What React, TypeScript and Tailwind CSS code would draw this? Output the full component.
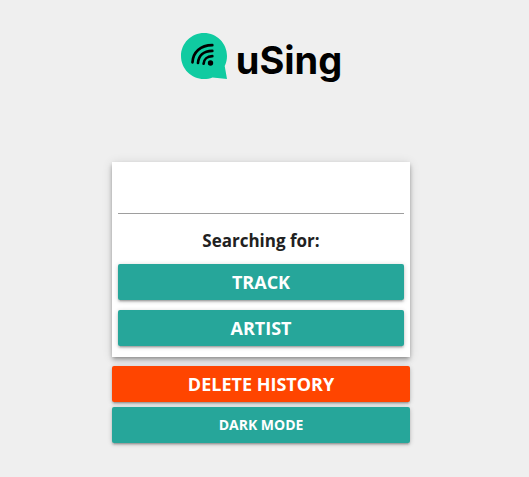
import type { ReactNode } from "react";

type ActionButtonProps = {
  children: ReactNode;
  tone?: "teal" | "danger";
  size?: "normal" | "small";
};

function ActionButton({ children, tone = "teal", size = "normal" }: ActionButtonProps) {
  const color = tone === "danger" ? "bg-[#ff4500]" : "bg-[#26a69a]";
  const text = size === "small" ? "text-[14px]" : "text-[18px]";
  return (
    <button
      type="button"
      className={`block h-9 w-full cursor-pointer rounded-xs text-center leading-9 font-bold text-white uppercase shadow-[0_2px_2px_0_rgba(0,0,0,0.14),0_3px_1px_-2px_rgba(0,0,0,0.12),0_1px_5px_0_rgba(0,0,0,0.2)] ${color} ${text}`}
    >
      {children}
    </button>
  );
}

function Logo() {
  return (
    <header className="flex h-14 justify-center gap-2">
      <svg viewBox="0 0 48 48" className="size-12 shrink-0" aria-hidden="true">
        <path
          d="M24 1C11.3 1 1 11.3 1 24s10.300 23 23 23c3 0 5.900-.6 8.500-1.600L47 47l-2.300-13C46.200 31 47 27.600 47 24 47 11.300 36.700 1 24 1Z"
          fill="#10cba1"
        />
        <g fill="none" stroke="#000" strokeWidth="2.700" strokeLinecap="round">
          <path d="M12.500 30.300C13 20.500 20.300 13.300 32.300 13.200" />
          <path d="M18 31C18.500 24 23.300 19 32.300 18.900" />
          <path d="M23.600 31.700C23.800 27.500 27.200 24.300 32.300 24.200" />
        </g>
        <circle cx="30.500" cy="31" r="2.700" fill="#000" />
      </svg>
      <h1 className="font-['Inter',sans-serif] text-[38px] leading-14 font-bold text-black">uSing</h1>
    </header>
  );
}

export default function App() {
  return (
    <div className="min-h-screen bg-[#efefef] pt-8 pr-[7px] pb-8 font-['Open_Sans',sans-serif]">
      <Logo />
      <main className="mx-auto mt-[74px] w-4/7">
        <section className="bg-white px-1.5 pt-1.5 pb-[11px] shadow-[0_4px_5px_0_rgba(0,0,0,0.14),0_1px_10px_0_rgba(0,0,0,0.12),0_2px_4px_-1px_rgba(0,0,0,0.3)]">
          <input
            type="text"
            aria-label="Search"
            className="block h-[46px] w-full border-b border-[#9e9e9e] bg-transparent text-base outline-none"
          />
          <p className="pt-[14px] pb-[10px] text-center text-[17px] leading-[26px] font-bold text-[#212121]">
            Searching for:
          </p>
          <div className="flex flex-col gap-2.5">
            <ActionButton>Track</ActionButton>
            <ActionButton>Artist</ActionButton>
          </div>
        </section>
        <div className="mt-[9px] flex flex-col gap-[5px]">
          <ActionButton tone="danger">Delete history</ActionButton>
          <ActionButton size="small">Dark mode</ActionButton>
        </div>
      </main>
    </div>
  );
}
